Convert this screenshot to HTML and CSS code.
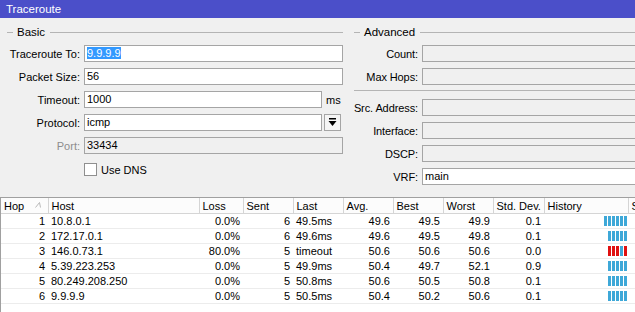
FILE: index.html
```html
<!DOCTYPE html>
<html lang="en">
<head>
    <meta charset="UTF-8">
    <title>Traceroute</title>
    <link rel="stylesheet" href="styles.css">
</head>
<body>
    <div class="titlebar">Traceroute</div>

    <div class="form">
        <div class="group basic">
            <div class="legend"><span class="tick"></span><span class="legend-text">Basic</span><span class="rule"></span></div>
            <div class="row">
                <label class="lbl">Traceroute To:</label>
                <div class="field"><span class="sel">9.9.9.9</span></div>
            </div>
            <div class="row">
                <label class="lbl">Packet Size:</label>
                <div class="field">56</div>
            </div>
            <div class="row">
                <label class="lbl">Timeout:</label>
                <div class="field short">1000</div>
                <span class="unit">ms</span>
            </div>
            <div class="row">
                <label class="lbl">Protocol:</label>
                <div class="field short">icmp</div>
                <div class="drop">
                    <svg width="9" height="9" viewBox="0 0 9 9"><rect x="1" y="0" width="7" height="1.5" fill="#000"/><path d="M0.5 3 H8.5 L4.5 8 Z" fill="#000"/></svg>
                </div>
            </div>
            <div class="row">
                <label class="lbl disabled">Port:</label>
                <div class="field off">33434</div>
            </div>
            <div class="row check-row">
                <span class="box"></span>
                <span class="check-text">Use DNS</span>
            </div>
        </div>

        <div class="group advanced">
            <div class="legend"><span class="tick"></span><span class="legend-text">Advanced</span><span class="rule"></span></div>
            <div class="row">
                <label class="lbl">Count:</label>
                <div class="field off"></div>
            </div>
            <div class="row">
                <label class="lbl">Max Hops:</label>
                <div class="field off"></div>
            </div>
            <div class="sep"></div>
            <div class="row">
                <label class="lbl">Src. Address:</label>
                <div class="field off"></div>
            </div>
            <div class="row">
                <label class="lbl">Interface:</label>
                <div class="field off"></div>
            </div>
            <div class="row">
                <label class="lbl">DSCP:</label>
                <div class="field off"></div>
            </div>
            <div class="row">
                <label class="lbl">VRF:</label>
                <div class="field">main</div>
            </div>
        </div>
    </div>

    <div class="results">
        <table>
            <colgroup>
                <col style="width:47px"><col style="width:151px"><col style="width:44px"><col style="width:50px">
                <col style="width:50px"><col style="width:50px"><col style="width:50px"><col style="width:50px">
                <col style="width:51px"><col style="width:84px"><col style="width:40px">
            </colgroup>
            <thead>
                <tr>
                    <th class="hop-h">Hop<svg class="sort" width="6" height="6" viewBox="0 0 6 6"><path d="M0.5 5.5 L4.5 0.5 L5.5 5.5" fill="none" stroke="#b8b8b8" stroke-width="1"/></svg></th>
                    <th>Host</th><th>Loss</th><th>Sent</th><th>Last</th><th>Avg.</th>
                    <th>Best</th><th>Worst</th><th>Std. Dev.</th><th>History</th><th>S</th>
                </tr>
            </thead>
            <tbody id="rows"></tbody>
        </table>
    </div>

    <script>
        var hops = [
            ['1', '10.8.0.1', '0.0%', '6', '49.5ms', '49.6', '49.5', '49.9', '0.1', 'bbbbbb'],
            ['2', '172.17.0.1', '0.0%', '6', '49.6ms', '49.6', '49.5', '49.8', '0.1', 'bbbbb'],
            ['3', '146.0.73.1', '80.0%', '5', 'timeout', '50.6', '50.6', '50.6', '0.0', 'rrrbr'],
            ['4', '5.39.223.253', '0.0%', '5', '49.9ms', '50.4', '49.7', '52.1', '0.9', 'bbbbb'],
            ['5', '80.249.208.250', '0.0%', '5', '50.8ms', '50.6', '50.5', '50.8', '0.1', 'bbbbb'],
            ['6', '9.9.9.9', '0.0%', '5', '50.5ms', '50.4', '50.2', '50.6', '0.1', 'bbbbb']
        ];
        var align = ['r', 'l', 'r', 'r', 'l', 'r', 'r', 'r', 'r'];
        var body = document.getElementById('rows');

        hops.forEach(function(h) {
            var tr = document.createElement('tr');
            for (var i = 0; i < 9; i++) {
                var td = document.createElement('td');
                td.textContent = h[i];
                if (align[i] === 'r') td.className = 'num';
                tr.appendChild(td);
            }
            // history bars
            var hist = document.createElement('td');
            hist.className = 'hist';
            h[9].split('').forEach(function(c) {
                var bar = document.createElement('span');
                bar.className = c === 'r' ? 'bar lost' : 'bar';
                hist.appendChild(bar);
            });
            tr.appendChild(hist);
            tr.appendChild(document.createElement('td'));
            body.appendChild(tr);
        });
    </script>
</body>
</html>
```

FILE: styles.css
```css
html, body {
    margin: 0;
    padding: 0;
}
body {
    width: 635px;
    height: 312px;
    overflow: hidden;
    background: #f0f0f0;
    font-family: "Liberation Sans", Arial, sans-serif;
    font-size: 11px;
    color: #000;
}
.titlebar {
    height: 18px;
    line-height: 18px;
    background: #4b4fc9;
    color: #fff;
    padding-left: 6px;
    font-size: 11.5px;
}
.form {
    display: flex;
    padding-top: 7px;
    height: 172px;
}
.group {
    display: flex;
    flex-direction: column;
    gap: 6px;
}
.basic {
    width: 343px;
    flex: none;
}
.advanced {
    margin-left: 11px;
    flex: 1;
    overflow: hidden;
}
.legend {
    display: flex;
    align-items: center;
    height: 14px;
    padding-left: 7px;
    color: #000;
    font-size: 11.5px;
}
.advanced .legend {
    padding-left: 0;
}
.tick {
    width: 6px;
    border-top: 1px solid #b4b4b4;
}
.legend-text {
    padding: 0 5px 0 4px;
}
.rule {
    flex: 1;
    border-top: 1px solid #b4b4b4;
}
.row {
    display: flex;
    align-items: center;
    height: 17px;
}
.lbl {
    box-sizing: border-box;
    width: 84px;
    flex: none;
    display: flex;
    justify-content: flex-end;
    padding-right: 4px;
    white-space: nowrap;
}
.advanced .lbl {
    width: 68px;
    letter-spacing: -0.1px;
}
.lbl.disabled {
    color: #8d8d8d;
}
.field {
    box-sizing: border-box;
    width: 259px;
    height: 17px;
    line-height: 15px;
    border: 1px solid #a5a5a5;
    background: #fff;
    padding-left: 2px;
    white-space: nowrap;
    flex: none;
}
.field.short {
    width: 238px;
}
.field.off {
    background: #f0f0f0;
}
.advanced .field {
    width: 260px;
}
.sel {
    background: #3399ff;
    color: #fff;
}
.unit {
    padding-left: 4px;
}
.drop {
    box-sizing: border-box;
    width: 17px;
    height: 17px;
    margin-left: 2px;
    border: 1px solid #a5a5a5;
    background: #f5f5f5;
    display: flex;
    align-items: center;
    justify-content: center;
}
.check-row {
    padding-left: 84px;
    height: 13px;
    margin-top: 3px;
}
.box {
    box-sizing: border-box;
    width: 13px;
    height: 13px;
    border: 1px solid #8f8f8f;
    background: #fff;
}
.check-text {
    padding-left: 4px;
}
.sep {
    border-top: 1px solid #b4b4b4;
    margin: -1px 0 2px 0;
}
.results {
    height: 115px;
    background: #fff;
    border-top: 1px solid #a0a0a0;
    border-left: 1px solid #a0a0a0;
    overflow: hidden;
}
table {
    border-collapse: collapse;
    table-layout: fixed;
    width: 667px;
}
th {
    height: 15px;
    padding: 0 3px;
    font-weight: normal;
    text-align: left;
    background: #fcfcfc;
    border-right: 1px solid #d5d5d5;
    border-bottom: 1px solid #d5d5d5;
    white-space: nowrap;
    overflow: hidden;
}
.hop-h {
    position: relative;
}
.sort {
    position: absolute;
    left: 34px;
    top: 4px;
}
td {
    height: 14px;
    padding: 0 3px;
    border-bottom: 1px solid #ececec;
    white-space: nowrap;
    overflow: hidden;
}
td.num {
    text-align: right;
}
td.hist {
    text-align: right;
    padding-right: 1px;
    font-size: 0;
}
.bar {
    display: inline-block;
    width: 3px;
    height: 10px;
    margin-left: 1px;
    background: #3ea8d8;
    vertical-align: middle;
}
.bar.lost {
    background: #e01010;
}
```
